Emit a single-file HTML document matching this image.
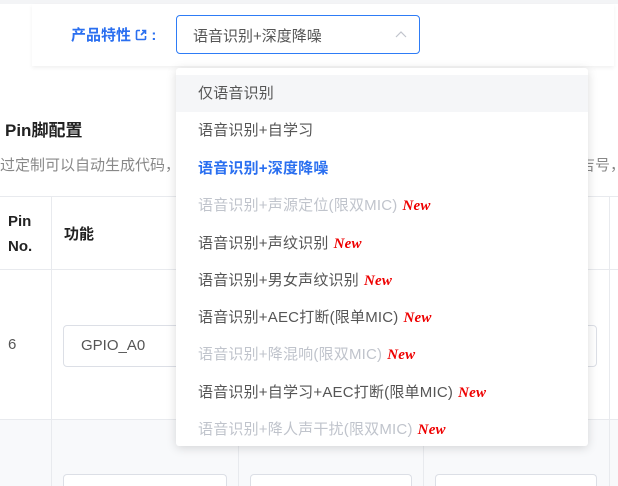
<!DOCTYPE html>
<html><head><meta charset="utf-8"><style>
*{margin:0;padding:0;box-sizing:border-box}
html,body{width:618px;height:486px;overflow:hidden}
body{background:#fff;font-family:"Liberation Sans","Noto Sans CJK SC",sans-serif;position:relative;font-size:15px;color:#333}
.abs{position:absolute;white-space:nowrap}
.top{left:0;top:0;width:618px;height:4px;background:#f3f4f6}
.card{left:32px;top:4px;width:582px;height:62px;background:#fff;box-shadow:0 2px 4px rgba(0,0,0,.06)}
.lbl{left:71px;top:24px;color:#2a6ff0;font-weight:bold;font-size:15px}
.sel{left:176px;top:15px;width:244px;height:39px;border:1px solid #2e7cf6;border-radius:4px;background:#fff}
.sel span{position:absolute;left:16px;top:9px;color:#555;font-size:15px}
.menu{left:176px;top:68px;width:412px;height:378px;background:#fff;border-radius:3px;box-shadow:0 2px 10px rgba(0,0,0,.15);overflow:hidden}
.it{position:absolute;left:0;width:412px;height:37px;line-height:37px;padding-left:22px;font-size:15px;color:#555;letter-spacing:0.2px}
.dis{color:#c0c4cc}
.new{color:#e00;font-family:"Liberation Serif",serif;font-style:italic;font-weight:bold;font-size:15px;margin-left:5px}
.vl{width:1px;background:#e8eaee}
.hl{height:1px;background:#e8eaee}
.inp{border:1px solid #dcdfe6;border-radius:4px;background:#fff;height:42px}
</style></head><body>
<div class="abs top"></div>
<div class="abs card"></div>
<div class="abs lbl">产品特性 <svg width="12" height="12" viewBox="0 0 12 12" style="vertical-align:-1px"><path d="M5 1.5H2.5a1 1 0 0 0-1 1v7a1 1 0 0 0 1 1h7a1 1 0 0 0 1-1V7M7 1.5h3.5V5M10.5 1.5L6 6" fill="none" stroke="#2a6ff0" stroke-width="1.6"/></svg> :</div>
<div class="abs sel"><span>语音识别+深度降噪</span><svg class="abs" style="left:218px;top:14px" width="12" height="8" viewBox="0 0 12 8"><path d="M1 7L6 2l5 5" fill="none" stroke="#c0c4cc" stroke-width="1.2"/></svg></div>

<div class="abs" style="left:5px;top:116px;font-size:17px;font-weight:bold;color:#222">Pin脚配置</div>
<div class="abs" style="left:0;top:154px;color:#888;font-size:15px">过定制可以自动生成代码，</div>
<div class="abs" style="left:580px;top:154px;color:#888;font-size:15px">吉号，</div>

<div class="abs hl" style="left:0;top:196px;width:618px"></div>
<div class="abs hl" style="left:0;top:269px;width:618px"></div>
<div class="abs" style="left:0;top:419px;width:618px;height:67px;background:#f8f9fb"></div>
<div class="abs hl" style="left:0;top:419px;width:618px"></div>
<div class="abs vl" style="left:51px;top:196px;height:290px"></div>
<div class="abs vl" style="left:238px;top:196px;height:290px"></div>
<div class="abs vl" style="left:423px;top:196px;height:290px"></div>
<div class="abs vl" style="left:609px;top:196px;height:290px"></div>
<div class="abs" style="left:8px;top:209px;font-weight:bold;color:#222;line-height:25px">Pin<br>No.</div>
<div class="abs" style="left:64px;top:223px;font-weight:bold;color:#222">功能</div>
<div class="abs" style="left:8px;top:336px;color:#555">6</div>
<div class="abs inp" style="left:63px;top:325px;width:200px"><span class="abs" style="left:17px;top:11px;color:#555">GPIO_A0</span></div>
<div class="abs inp" style="left:500px;top:325px;width:97px"></div>
<div class="abs inp" style="left:63px;top:474px;width:164px;height:12px;border-bottom:none;border-radius:4px 4px 0 0"></div>
<div class="abs inp" style="left:250px;top:474px;width:162px;height:12px;border-bottom:none;border-radius:4px 4px 0 0"></div>
<div class="abs inp" style="left:435px;top:474px;width:162px;height:12px;border-bottom:none;border-radius:4px 4px 0 0"></div>

<div class="abs menu">
<div class="it" style="top:7px;background:#f5f6f8">仅语音识别</div>
<div class="it" style="top:44px">语音识别+自学习</div>
<div class="it" style="top:82px;color:#2a6ff0;font-weight:bold">语音识别+深度降噪</div>
<div class="it dis" style="top:119px">语音识别+声源定位(限双MIC)<span class="new">New</span></div>
<div class="it" style="top:157px">语音识别+声纹识别<span class="new">New</span></div>
<div class="it" style="top:194px">语音识别+男女声纹识别<span class="new">New</span></div>
<div class="it" style="top:231px">语音识别+AEC打断(限单MIC)<span class="new">New</span></div>
<div class="it dis" style="top:268px">语音识别+降混响(限双MIC)<span class="new">New</span></div>
<div class="it" style="top:306px">语音识别+自学习+AEC打断(限单MIC)<span class="new">New</span></div>
<div class="it dis" style="top:343px">语音识别+降人声干扰(限双MIC)<span class="new">New</span></div>
</div>
</body></html>
